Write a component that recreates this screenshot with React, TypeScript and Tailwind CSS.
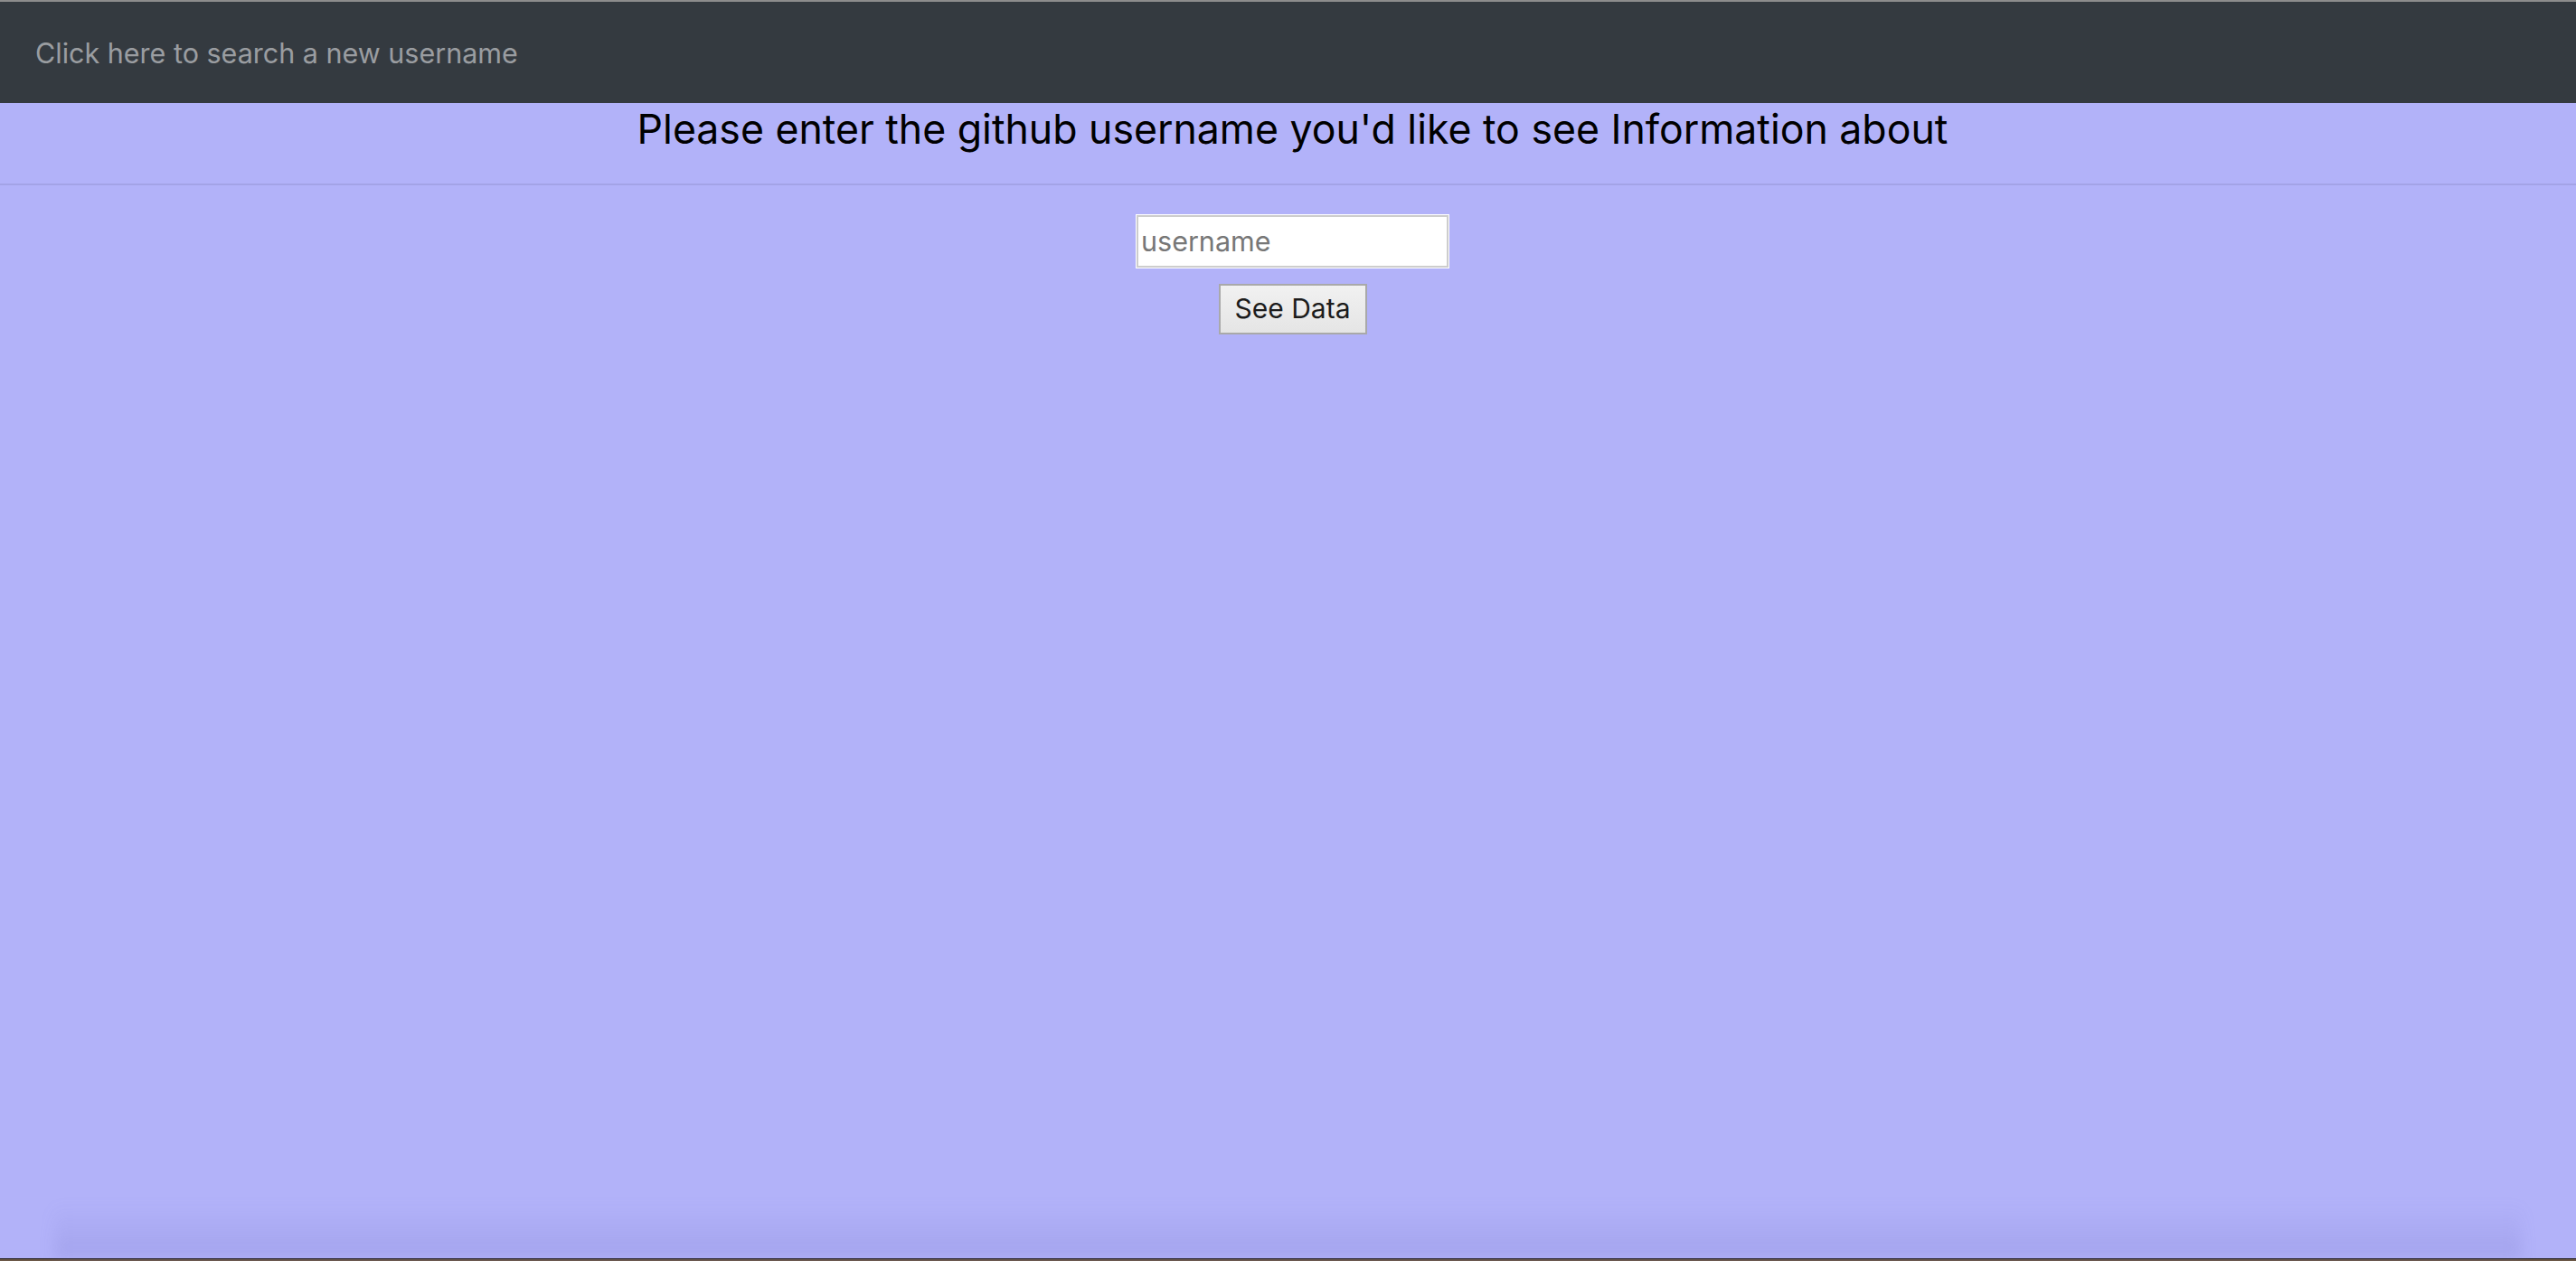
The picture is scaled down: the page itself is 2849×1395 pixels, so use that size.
export default function App() {
  return (
    <div className="relative flex h-[1395px] w-full flex-col overflow-hidden bg-[#b2b2f9] font-['Inter','Liberation_Sans',sans-serif]">
      <div className="h-[2px] w-full bg-[#8c8c8c]" />
      <nav className="flex h-[112px] w-full items-center bg-[#343a40] pl-[39px]">
        <span className="mt-[2px] text-[30.5px] text-[#9a9da1]">Click here to search a new username</span>
      </nav>
      <div className="flex flex-1 flex-col">
        <h1 className="mt-[3px] pl-[10px] text-center text-[44.6px] leading-[1.2] font-normal text-black">
          Please enter the github username you'd like to see Information about
        </h1>
        <div className="mt-[32px] h-[2px] w-full bg-[#a3a3e6]" />
        <div className="flex flex-col items-center pl-[10px]">
          <input
            placeholder="username"
            className="mt-[33px] h-[58px] w-[345px] border-2 border-[#cdcdcd] bg-white px-[3px] text-[30.5px] text-black outline-none ring-1 ring-white placeholder:text-[#777777]"
          />
          <button className="mt-[18px] h-[56px] w-[164px] border-2 border-[#a9a9a9] bg-gradient-to-b from-[#f1f1f1] to-[#e5e5e5] text-[30px] text-[#1c1c1c]">
            See Data
          </button>
        </div>
      </div>
      <div className="pointer-events-none absolute bottom-[3px] left-[60px] right-[60px] h-[60px] bg-gradient-to-b from-transparent to-[#6a6ac0]/20 blur-[8px]" />
      <div className="h-[1px] w-full bg-[#1e1915]" />
      <div className="h-[2px] w-full bg-[#6b5847]" />
    </div>
  );
}
